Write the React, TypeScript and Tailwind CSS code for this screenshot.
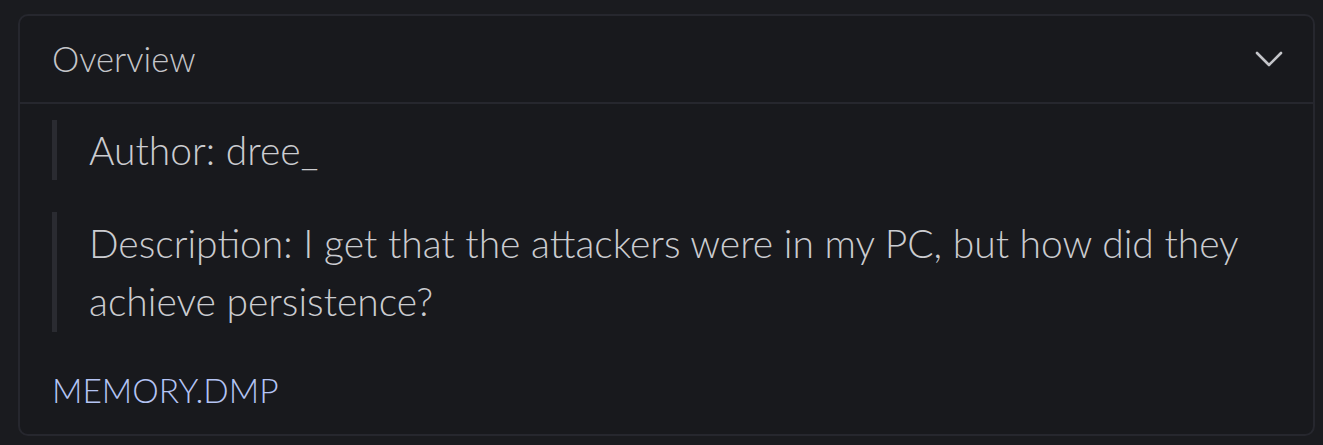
import React from "react";

function Chevron() {
  return (
    <svg width="28" height="18" viewBox="0 0 28 18" fill="none" stroke="currentColor" strokeWidth="2.6" strokeLinecap="round" strokeLinejoin="round">
      <path d="M2 3l12 12 12-12" />
    </svg>
  );
}

export default function App() {
  return (
    <div className="min-h-[445px] bg-[#1a1b1f] pl-[18px] pr-[8px] pt-[14px] pb-[10px] font-['Lato',sans-serif]">
      <div className="rounded-[10px] border-2 border-[#26272e] bg-[#18191d]">
        <div className="flex h-[88px] items-center justify-between border-b-2 border-[#26272e] pl-[32px] pr-[30px] text-[#c4c5c9]">
          <span className="text-[34.5px] font-light">Overview</span>
          <Chevron />
        </div>
        <div className="flex flex-col px-[32px] pt-[16px] pb-[24px] text-[39px] leading-[58px] text-[#cbccd0] font-light">
          <div className="border-l-[5px] border-[#2a2b31] pl-[32px] py-[1px]">
            Author: dree_
          </div>
          <div className="mt-[32px] border-l-[5px] border-[#2a2b31] pl-[32px] py-[2px] pr-[40px]">
            Description: I get that the attackers were in my PC, but how did they achieve persistence?
          </div>
          <a className="mt-[38px] text-[33.5px] leading-[40px] font-light text-[#b4c4f4]">MEMORY.DMP</a>
        </div>
      </div>
    </div>
  );
}
